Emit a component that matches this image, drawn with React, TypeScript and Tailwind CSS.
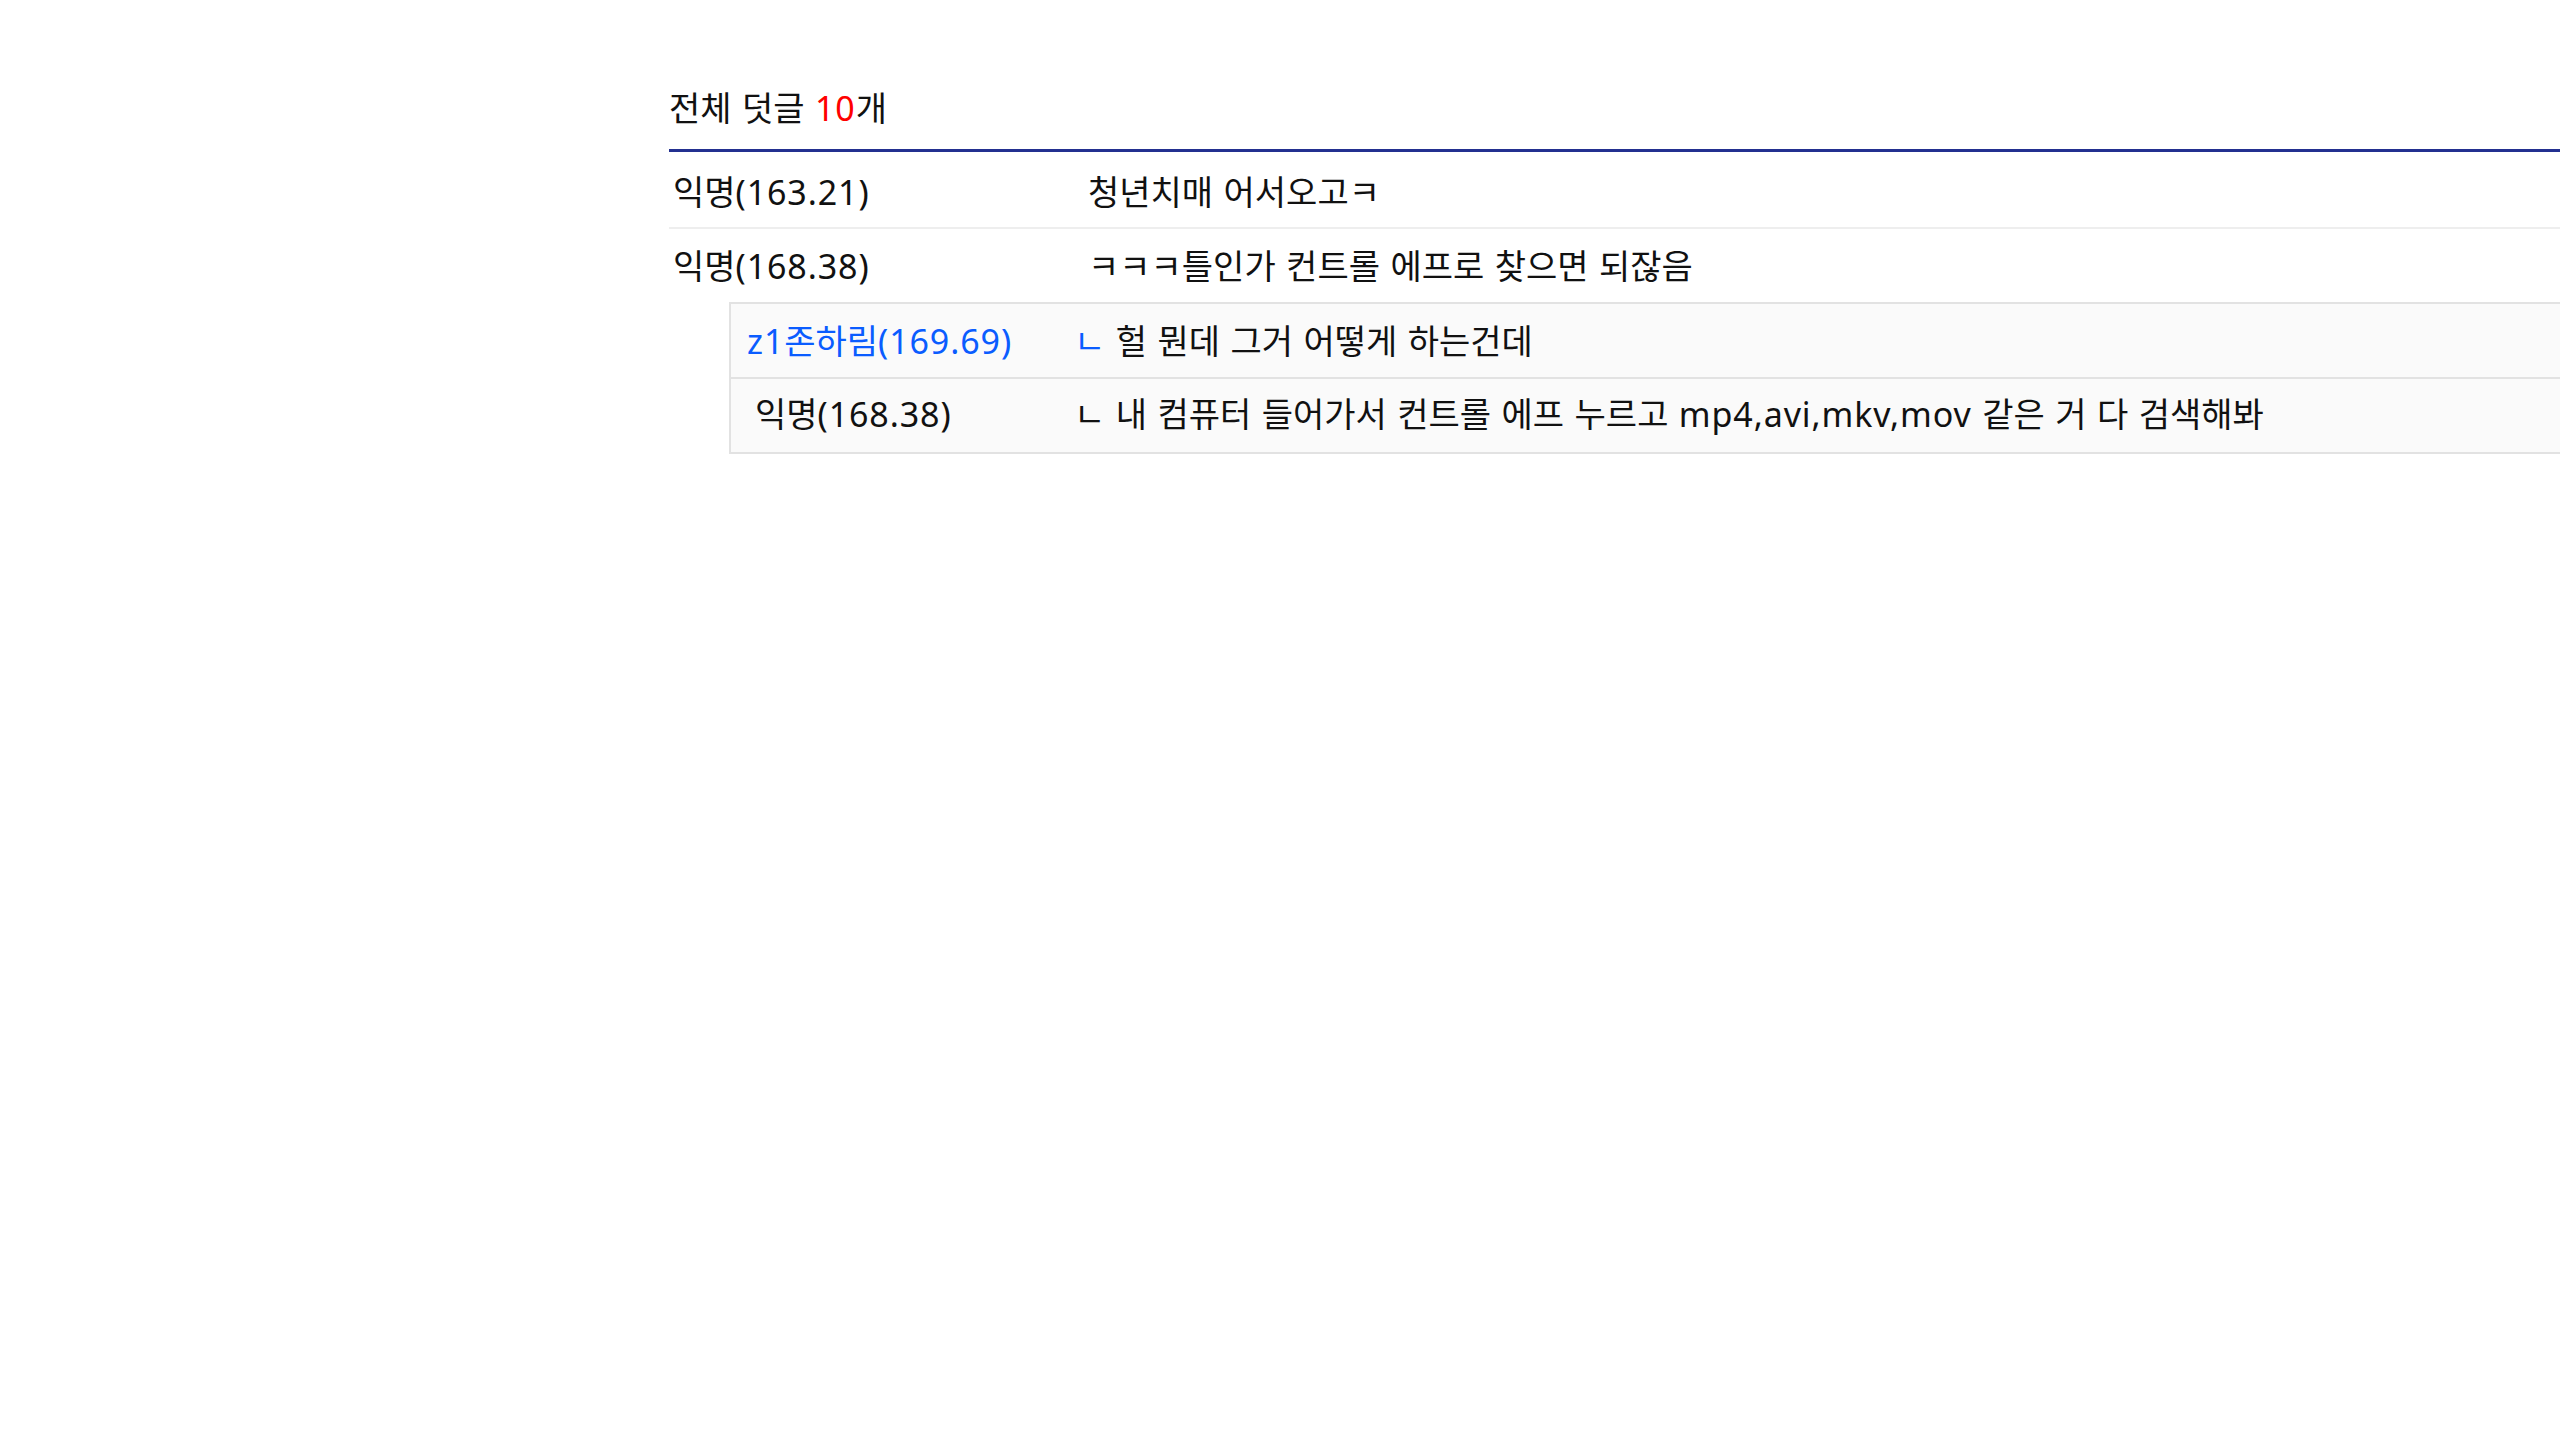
import React from "react";

type Reply = {
  name: string;
  body: string;
  highlight?: boolean;
};

const comments = [
  { name: "익명(163.21)", body: "청년치매 어서오고ㅋ" },
  { name: "익명(168.38)", body: "ㅋㅋㅋ틀인가 컨트롤 에프로 찾으면 되잖음" },
];

const replies: Reply[] = [
  { name: "z1존하림(169.69)", body: "헐 뭔데 그거 어떻게 하는건데", highlight: true },
  { name: "익명(168.38)", body: "내 컴퓨터 들어가서 컨트롤 에프 누르고 mp4,avi,mkv,mov 같은 거 다 검색해봐" },
];

// latin runs get a touch of tracking so they sit like the hangul around them
function Text({ value }: { value: string }) {
  const parts = value.split(/([A-Za-z0-9.,()]+)/);
  return (
    <>
      {parts.map((p, i) =>
        i % 2 === 1 ? (
          <span key={i} className="tracking-[0.9px]">
            {p}
          </span>
        ) : (
          <React.Fragment key={i}>{p}</React.Fragment>
        )
      )}
    </>
  );
}

export default function App() {
  return (
    <div
      className="min-h-screen bg-white text-[34px] leading-[48px] text-[#111] overflow-hidden [word-spacing:1.6px]"
      style={{ fontFamily: '"Noto Sans", "Noto Sans CJK KR", sans-serif' }}
    >
      <div className="ml-[669px]">
        <div className="pt-[84px] pb-[17px] border-b-[3px] border-[#233090]">
          전체 덧글 <span className="text-[#ff0000] tracking-[0.9px]">10</span>개
        </div>

        {comments.map((c, i) => (
          <div
            key={i}
            className={
              i === 0
                ? "flex items-center h-[77px] pt-[4px] border-b-2 border-[#eeeeee]"
                : "flex items-center h-[73px]"
            }
          >
            <div className="w-[419px] shrink-0 pl-[4px]">
              <Text value={c.name} />
            </div>
            <div>
              <Text value={c.body} />
            </div>
          </div>
        ))}

        <div className="ml-[60px] border-2 border-r-0 border-[#e2e2e2] bg-[#fafafa]">
          {replies.map((r, i) => (
            <div
              key={i}
              className={
                i === 0
                  ? "flex items-center h-[75px] border-b-2 border-[#e2e2e2]"
                  : "flex items-center h-[73px] pb-[4px]"
              }
            >
              <div
                className={
                  r.highlight
                    ? "w-[343px] shrink-0 pl-[16px] text-[#0a5cff]"
                    : "w-[343px] shrink-0 pl-[24px]"
                }
              >
                <Text value={r.name} />
              </div>
              <div>
                <span className={r.highlight ? "text-[#0a5cff]" : ""}>ㄴ</span>{" "}
                <Text value={r.body} />
              </div>
            </div>
          ))}
        </div>
      </div>
    </div>
  );
}
